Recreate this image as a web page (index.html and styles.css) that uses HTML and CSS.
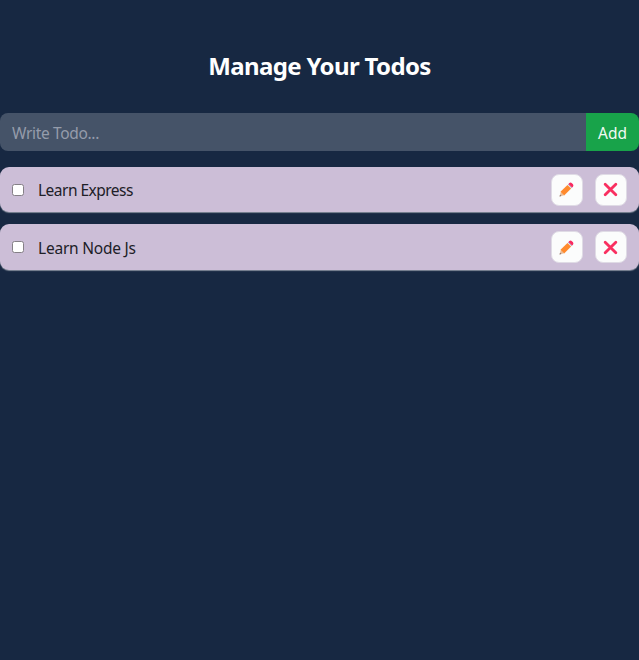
FILE: index.html
```html
<!DOCTYPE html>
<html lang="en">
<head>
<meta charset="utf-8">
<title>Manage Your Todos</title>
<link rel="stylesheet" href="styles.css">
</head>
<body>
<svg class="defs" width="0" height="0" aria-hidden="true">
  <symbol id="pencil" viewBox="0 0 16 16">
    <path d="M0.6 15.4 L1.9 10.6 L5.4 14.1 Z" fill="#e9bd98"/>
    <path d="M0.6 15.4 L1.1 13.5 L2.5 14.9 Z" fill="#7b6867"/>
    <path d="M1.6 10.5 L9 3.1 L12.9 7 L5.5 14.4 Z" fill="#ff8a2d"/>
    <path d="M9.4 2.7 L10.2 1.9 L14.1 5.8 L13.3 6.6 Z" fill="#b7a9c4"/>
    <path d="M10.1 2 L11 1.1 Q12.4 0 13.8 1.3 L14.7 2.2 Q16 3.6 14.9 5 L14 5.9 Z" fill="#f8295f"/>
  </symbol>
  <symbol id="cross" viewBox="0 0 16 16">
    <path d="M2.3 2.3 L13.7 13.7 M13.7 2.3 L2.3 13.7" fill="none" stroke="#f92f60" stroke-width="3" stroke-linecap="round"/>
  </symbol>
</svg>
<main>
  <h1>Manage Your Todos</h1>
  <form class="todo-form">
    <input class="todo-input" type="text" placeholder="Write Todo...">
    <button class="add" type="button">Add</button>
  </form>
  <ul class="todos">
    <li class="todo">
      <input class="check" type="checkbox" aria-label="Done">
      <span class="label">Learn Express</span>
      <button class="action" type="button" aria-label="Edit"><svg><use href="#pencil"/></svg></button>
      <button class="action" type="button" aria-label="Delete"><svg><use href="#cross"/></svg></button>
    </li>
    <li class="todo">
      <input class="check" type="checkbox" aria-label="Done">
      <span class="label node">Learn Node Js</span>
      <button class="action" type="button" aria-label="Edit"><svg><use href="#pencil"/></svg></button>
      <button class="action" type="button" aria-label="Delete"><svg><use href="#cross"/></svg></button>
    </li>
  </ul>
</main>
</body>
</html>
```
FILE: styles.css
```css
* { box-sizing: border-box; }
body {
  margin: 0;
  min-height: 100vh;
  background: #172842;
  color: #fff;
  font: 15.5px/24px "Segoe UI", "Noto Sans", sans-serif;
}
.defs { display: block; }
main { padding-top: 48px; }
h1 {
  margin: 0 0 29px;
  font-size: 24px;
  line-height: 36px;
  font-weight: 700;
  text-align: center;
  letter-spacing: -0.65px;
}
.todo-form { display: flex; height: 37.5px; margin-bottom: 16px; }
.todo-input {
  flex: 1;
  min-width: 0;
  padding: 2px 12px 0;
  border: 0;
  border-radius: 8px 0 0 8px;
  background: #455368;
  color: #fff;
  font: inherit;
  letter-spacing: -0.33px;
  outline: none;
}
.todo-input::placeholder { color: #959cab; opacity: 1; }
.add {
  width: 53px;
  padding: 2px 0 0;
  border: 0;
  border-radius: 0 8px 8px 0;
  background: #18a34a;
  color: #f0faf3;
  font: inherit;
}
.todos {
  display: flex;
  flex-direction: column;
  gap: 12px;
  margin: 0;
  padding: 0;
  list-style: none;
}
.todo {
  display: flex;
  align-items: center;
  height: 45.5px;
  padding: 1px 12px 0;
  border-radius: 9px;
  background: #ccbed7;
  color: #202027;
  box-shadow: 0 1px 1px rgba(255, 255, 255, 0.45);
}
.check {
  appearance: none;
  width: 12px;
  height: 12px;
  margin: 0 14px 0 0;
  border: 1px solid #858087;
  border-radius: 2.5px;
  background: #fff;
}
.label { flex: 1; padding-top: 1px; letter-spacing: -0.52px; }
.node { letter-spacing: -0.22px; }
.action {
  display: flex;
  align-items: center;
  justify-content: center;
  width: 32px;
  height: 32px;
  margin-left: 12px;
  padding: 0 1px 0 0;
  border: 1px solid #dfdbe5;
  border-radius: 8px;
  background: #fbfcfc;
}
.action svg { width: 15px; height: 15px; }
```
